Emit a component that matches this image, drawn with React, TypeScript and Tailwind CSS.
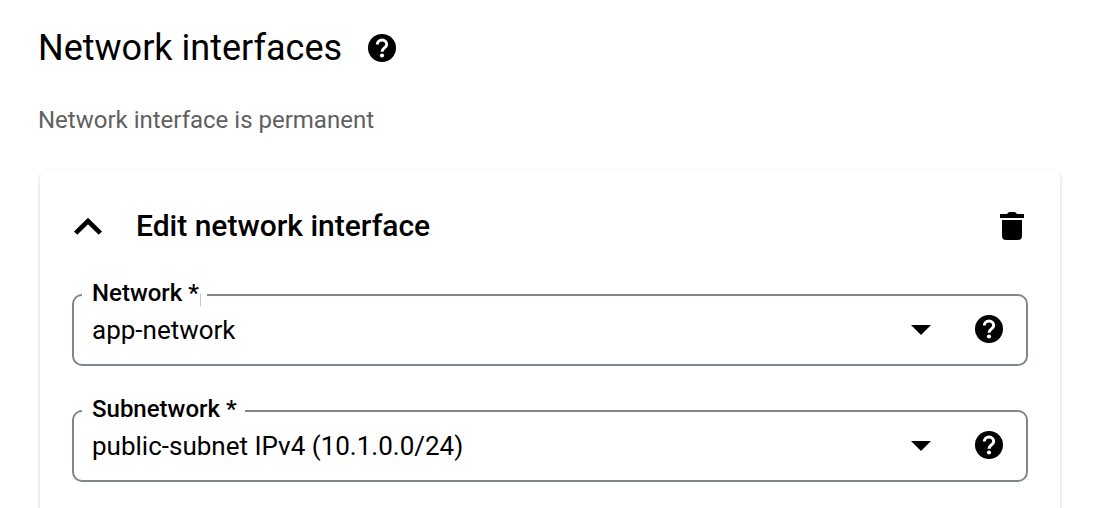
import { useState } from "react";

function HelpIcon() {
  return (
    <svg viewBox="0 0 28 28" className="block size-7" aria-hidden="true">
      <circle cx="14" cy="14" r="14" fill="#000" />
      <path
        d="M9.3 10.5a4.7 4.5 0 1 1 9.4 0c0 3.3-4.7 3.5-4.7 7.2"
        fill="none"
        stroke="#fff"
        strokeWidth="3"
      />
      <circle cx="14" cy="21.5" r="2.1" fill="#fff" />
    </svg>
  );
}

function HelpButton({ label, className = "" }: { label: string; className?: string }) {
  return (
    <button type="button" aria-label={label} className={`shrink-0 ${className}`}>
      <HelpIcon />
    </button>
  );
}

type FieldProps = {
  id: string;
  label: string;
  options: string[];
  caret?: boolean;
};

function SelectField({ id, label, options, caret = false }: FieldProps) {
  return (
    <fieldset className="h-21 min-w-0 rounded-[10px] border-2 border-[#80868b] pr-[23px] pl-2">
      <legend className="relative h-[26px] pr-2 pl-[10px] text-[24px] leading-[22px] font-medium">
        <label htmlFor={id}>{label} *</label>
        {caret && <span className="absolute right-[6px] bottom-[2px] h-3 w-px bg-[#c4c4c4]" />}
      </legend>
      <div className="flex items-center gap-11">
        <div className="grid min-w-0 flex-1 items-center">
          <select
            id={id}
            className="col-start-1 row-start-1 h-11 w-full appearance-none bg-transparent pr-8 pl-[10px] text-[26px]"
          >
            {options.map((option) => (
              <option key={option}>{option}</option>
            ))}
          </select>
          <svg
            viewBox="0 0 20 10"
            className="pointer-events-none col-start-1 row-start-1 h-[10px] w-5 justify-self-end"
            aria-hidden="true"
          >
            <path d="M0 0h20L10 10z" />
          </svg>
        </div>
        <HelpButton label={`Help for ${label}`} className="pb-0.5" />
      </div>
    </fieldset>
  );
}

export default function App() {
  const [open, setOpen] = useState(true);
  return (
    <main className="h-screen overflow-hidden bg-white pt-6 pr-[58px] pl-[38px] font-['Roboto',sans-serif] text-black">
      <header className="flex items-center gap-[26px]">
        <h1 className="text-[36px] leading-12">Network interfaces</h1>
        <HelpButton label="Help for network interfaces" />
      </header>
      <p className="mt-8 text-[24px] leading-8 text-[#5f5f5f]">Network interface is permanent</p>
      <section className="mt-[34px] ml-0.5 rounded-lg px-8 pt-8 pb-16 shadow-[0_2px_4px_rgba(0,0,0,0.18)]">
        <div className="flex h-12 items-center">
          <button
            type="button"
            aria-expanded={open}
            onClick={() => setOpen(!open)}
            className="flex flex-1 items-center gap-8 text-left"
          >
            <svg viewBox="0 0 32 32" className="size-8" aria-hidden="true">
              <path d="M3.6 23.2 16 11l12.4 12.2" fill="none" stroke="#000" strokeWidth="4.6" />
            </svg>
            <span className="text-[30px] leading-10 font-medium">Edit network interface</span>
          </button>
          <button type="button" aria-label="Delete network interface" className="mr-1">
            <svg viewBox="0 0 24 28" className="block h-7 w-6" aria-hidden="true">
              <path d="M0 2h7q1-2 3-2h4q2 0 3 2h7v4H0zM2 8h20v16a4 4 0 0 1-4 4H6a4 4 0 0 1-4-4z" />
            </svg>
          </button>
        </div>
        {open && (
          <div className="mt-8 flex flex-col gap-8">
            <SelectField id="network" label="Network" options={["app-network"]} caret />
            <SelectField
              id="subnetwork"
              label="Subnetwork"
              options={["public-subnet IPv4 (10.1.0.0/24)"]}
            />
          </div>
        )}
      </section>
    </main>
  );
}
